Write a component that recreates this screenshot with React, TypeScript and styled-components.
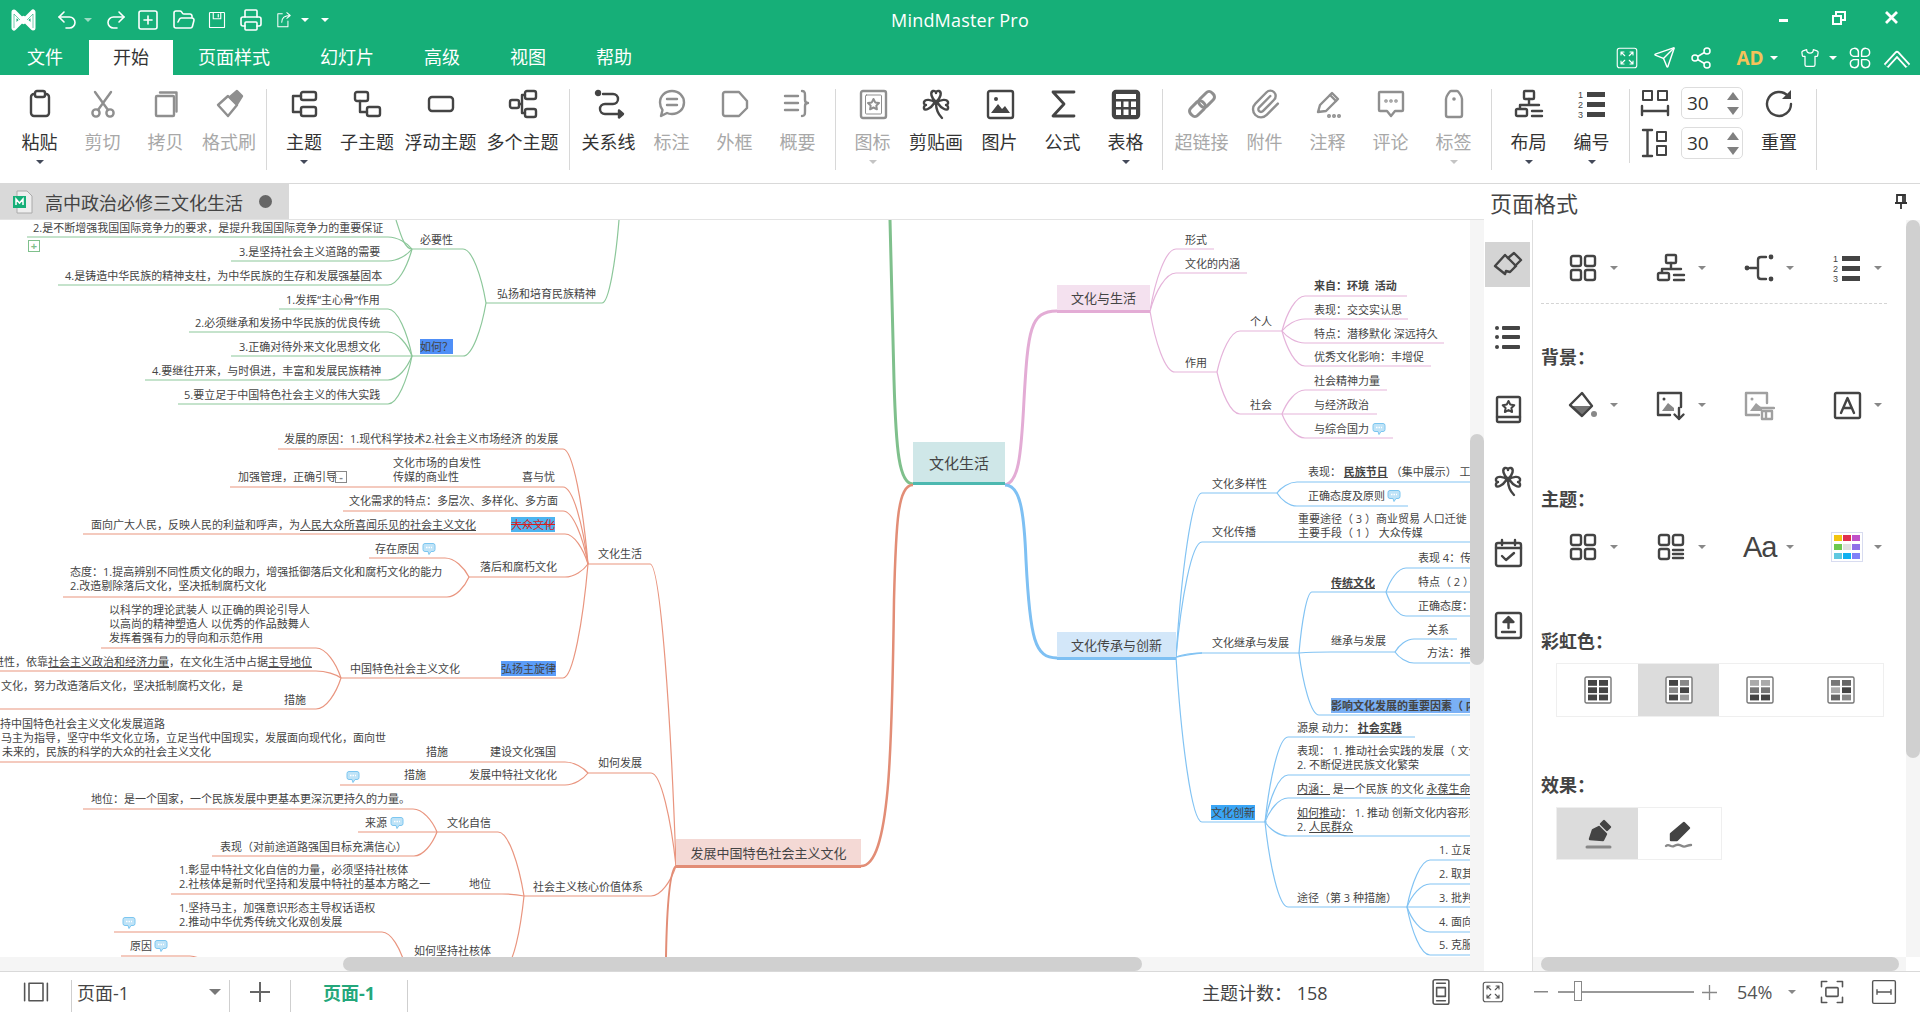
import React from 'react'
import styled, { createGlobalStyle } from 'styled-components'
import { Undo2, Redo2, SquarePlus, FolderOpen, Printer, Send, Share2, Shirt, Paperclip } from 'lucide-react'

const GREEN = '#16af78'
const FONT = `"Open Sans", "Noto Sans CJK SC", sans-serif`

const Global = createGlobalStyle`
	html, body { margin: 0; height: 1012px; overflow: hidden; background: #fff; }
	body { font-family: ${FONT}; color: #333; }
	* { box-sizing: border-box; }
`

const Ic = ({ children, s = 32, w = 2.4 }: { children: React.ReactNode; s?: number; w?: number }) => (
	<svg width={s} height={s} viewBox="0 0 32 32" fill="none" stroke="currentColor" strokeWidth={w} strokeLinecap="round" strokeLinejoin="round">
		{children}
	</svg>
)

// ribbon icons
const Clip = () => <Ic><rect x="7" y="6" width="18" height="22" rx="3" /><rect x="11" y="3" width="10" height="6" rx="2" fill="#fff" /></Ic>
const Cut = () => <Ic><circle cx="9" cy="25" r="3.6" /><circle cx="23" cy="25" r="3.6" /><path d="M11 22 24 4M21 22 8 4" /></Ic>
const Copy = () => <Ic><rect x="6" y="8" width="18" height="20" rx="1" /><path d="M10 4.500h16.500v19" /></Ic>
const Brush = () => <Ic><path d="M5 17 15 8l9 9-9 11z" /><path d="M17 9 24 3l5 5-5 8z" fill="currentColor" /></Ic>
const Topic = () => <Ic><rect x="13" y="4" width="15" height="8" rx="2" /><rect x="13" y="19" width="15" height="9" rx="2" /><path d="M13 8H5v16h8" /></Ic>
const SubTopic = () => <Ic><rect x="4" y="4" width="13" height="9" rx="2" /><rect x="16" y="19" width="13" height="9" rx="2" /><path d="M9 13v11h7" /></Ic>
const Floating = () => <Ic><rect x="4" y="9" width="24" height="14" rx="3" /></Ic>
const Multi = () => <Ic><rect x="3" y="12" width="9" height="8" rx="2" /><rect x="18" y="3" width="11" height="8" rx="2" /><rect x="18" y="21" width="11" height="8" rx="2" /><path d="M12 16h3M15 7v18M15 7h3M15 25h3" /></Ic>
const Relation = () => <Ic><circle cx="5" cy="5" r="2" fill="currentColor" /><path d="M10 6h10a5 5 0 0 1 0 10h-8a5 5 0 0 0 0 10h13" /><path d="M26 22.500 30 26l-4 3.500z" fill="currentColor" /></Ic>
const Callout = () => <Ic><path d="M16 3c7 0 12 5 12 11.500S23 26 16 26c-2 0-4-.5-5-1l-6 3 1.500-6C5 20 4 17.500 4 14.500 4 8 9 3 16 3z" /><path d="M11 11h10M11 17h10" /></Ic>
const Frame = () => <Ic><path d="M6 4h14l8 9v7l-8 8H6a2 2 0 0 1-2-2V6a2 2 0 0 1 2-2z" /></Ic>
const Summary = () => <Ic><path d="M3 8h13M3 15h13M3 22h13M20 3c3 0 3 2 3 5v4c0 2 1 3 3 3-2 0-3 1-3 3v5c0 3 0 5-3 5" /></Ic>
const Mark = () => <Ic><rect x="4" y="3" width="25" height="27" rx="2" /><rect x="8.500" y="7" width="16" height="19" rx="1" strokeWidth="1" /><path d="m16.500 11 1.700 3.400 3.800.6-2.700 2.600.6 3.700-3.400-1.800-3.400 1.800.6-3.700L11 15l3.800-.6z" strokeWidth="2" /></Ic>
const CloverIc = () => <Ic><path d="M16 14C11 10 10 4 13 3c2-.5 3 1 3 2 0-1 1-2.500 3-2 3 1 2 7-3 11zM16 15C11 11 5 11 4 14c-.5 2 1 3 2 3-1 0-2.500 1.500-2 3.500 1 3 7-.5 10-5zM16 15c5-4 11-4 12-1 .5 2-1 3-2 3 1 0 2.500 1.500 2 3.500-1 3-7-.5-10-5zM16 15c0 5 2 11 6 15" /></Ic>
const Picture = () => <Ic><rect x="4" y="3" width="25" height="27" rx="2" /><circle cx="12" cy="11" r="2" fill="currentColor" stroke="none" /><path d="M7 25l7-9 4 5 3-3 5 7z" fill="currentColor" stroke="none" /></Ic>
const Sigma = () => <Ic w={2.8}><path d="M27 4H6l11 12L6 28h21" /></Ic>
const Table = () => (
	<Ic>
		<rect x="3" y="3" width="26" height="27" rx="3" fill="currentColor" />
		<rect x="6" y="6" width="20" height="5" fill="#fff" stroke="none" />
		{[6, 13.5, 21].map(x => [13.500, 21.500].map(y => <rect key={`${x}${y}`} x={x} y={y} width="5" height="5.500" fill="#fff" stroke="none" />))}
	</Ic>
)
const Chain = () => <Ic w={3}><g transform="rotate(-45 16 16)"><rect x="1" y="11" width="17" height="10" rx="4" /><rect x="14" y="11" width="17" height="10" rx="4" /></g></Ic>
const Attach = () => <Paperclip size={32} strokeWidth={1.8} />
const Note = () => <Ic><path d="M6 24 8 17 20 5l6 6-12 12z" /><path d="m18 7 6 6" /><circle cx="17" cy="28" r=".8" /><circle cx="22" cy="28" r=".8" /><circle cx="27" cy="28" r=".8" /></Ic>
const Comment = () => <Ic><path d="M5 4h22a1 1 0 0 1 1 1v17a1 1 0 0 1-1 1h-7l-4 5-4-5H5a1 1 0 0 1-1-1V5a1 1 0 0 1 1-1z" /><circle cx="11" cy="13" r=".6" /><circle cx="16" cy="13" r=".6" /><circle cx="21" cy="13" r=".6" /></Ic>
const Tag = () => <Ic><path d="M8 11c0-3 4-8 5-8h6c1 0 5 5 5 8v16a2 2 0 0 1-2 2H10a2 2 0 0 1-2-2z" /><circle cx="16" cy="11" r="1.800" fill="currentColor" stroke="none" /></Ic>
const Layout = () => <Ic><rect x="11" y="3" width="10" height="8" rx="1" /><path d="M16 11v6M7 17h19M7 17v3" /><rect x="3" y="21" width="11" height="7" rx="1.500" /><path d="M19 23h10M19 28h10" /></Ic>
const NumList = () => (
	<Ic>
		<g fill="currentColor" stroke="none" fontFamily="Liberation Sans, sans-serif" fontSize="9">
			<text x="2" y="10">1</text>
			<text x="2" y="20">2</text>
			<text x="2" y="30">3</text>
			<rect x="11" y="4" width="18" height="5" />
			<rect x="11" y="14" width="18" height="5" />
			<rect x="11" y="24" width="18" height="5" />
		</g>
	</Ic>
)
const HSpace = () => <Ic><rect x="4" y="4" width="9" height="9" strokeWidth="2" /><rect x="19" y="4" width="9" height="9" strokeWidth="2" /><path d="M3 19v9M29 19v9M3 24h26" /></Ic>
const VSpace = () => <Ic><path d="M4 3h9M4 29h9M8.500 3v26" /><rect x="18" y="5" width="9" height="9" strokeWidth="2" /><rect x="18" y="19" width="9" height="9" strokeWidth="2" /></Ic>
const Reset = () => <Ic><path d="M25 8a12 12 0 1 0 3 8" /><path d="M28 2v9h-9z" fill="currentColor" stroke="none" /></Ic>

// panel and sidebar icons
const OutlineBrush = () => <Ic><path d="M3 17 13 6l11 11-6 6-4-1-1 3z" /><path d="m16 9 6-5 7 7-6 6" /></Ic>
const Bullets = () => <Ic><g fill="currentColor" stroke="none"><circle cx="5" cy="7" r="2" /><circle cx="5" cy="16" r="2" /><circle cx="5" cy="26" r="2" /><rect x="10" y="5" width="18" height="4" rx="1" /><rect x="10" y="14" width="18" height="4" rx="1" /><rect x="10" y="24" width="18" height="4" rx="1" /></g></Ic>
const Book = () => <Ic><rect x="5" y="4" width="23" height="25" rx="1.500" /><path d="M5 24h23" /><path d="m16.500 8 1.800 3.600 4 .6-2.900 2.800.7 4-3.600-1.900-3.600 1.900.7-4-2.900-2.800 4-.6z" strokeWidth="2" /></Ic>
const Calendar = () => <Ic><rect x="4" y="6" width="25" height="23" rx="2" /><path d="M4 11h25M10 3v5M23 3v5M10 19l4 4 8-7" /></Ic>
const Upload = () => <Ic><rect x="4" y="4" width="25" height="25" rx="2" /><path d="M10 23h13" /><path d="M16.500 19v-8" /><path d="M11.500 13l5-5 5 5z" fill="currentColor" /></Ic>
const Quad = () => <Ic><rect x="4" y="4" width="10" height="10" rx="2" /><rect x="18" y="4" width="10" height="10" rx="2" /><rect x="4" y="18" width="10" height="10" rx="2" /><rect x="18" y="18" width="10" height="10" rx="2" /></Ic>
const QuadList = () => <Ic><rect x="4" y="4" width="10" height="10" rx="2" /><rect x="18" y="4" width="10" height="10" rx="2" /><rect x="4" y="18" width="10" height="10" rx="2" /><path d="M18 19h10M18 23h10M18 27h10" /></Ic>
const Branch = () => <Ic><circle cx="4" cy="16" r="2.400" fill="currentColor" stroke="none" /><circle cx="28" cy="5" r="2.400" fill="currentColor" stroke="none" /><circle cx="28" cy="27" r="2.400" fill="currentColor" stroke="none" /><path d="M7 16h6M23 5h-5c-2 0-3 1-3 3v16c0 2 1 3 3 3h5" /></Ic>
const Bucket = () => <Ic><path d="M3 16 15 4l10 13-10 10z" /><path d="M5 17h19L15 27z" fill="currentColor" stroke="none" opacity=".75" /><circle cx="27" cy="25" r="3" fill="#888" stroke="none" /></Ic>
const ImgDown = () => <Ic><path d="M26 18V4H3v22h12" /><circle cx="9" cy="10" r="1.500" fill="currentColor" stroke="none" /><path d="M7 22l6-8 6 5v3z" fill="#888" stroke="none" /><path d="M24 19v11M19.500 25.500 24 30l4.500-4.500" /></Ic>
const ImgTrash = () => <Ic><path d="M24 14V4H3v22h13" /><circle cx="9" cy="10" r="1.500" fill="currentColor" stroke="none" /><path d="M7 22l6-8 6 5v3z" fill="currentColor" stroke="none" /><path d="M17 19h14M19 22h10v8H19zM23 22v8" /></Ic>
const LetterA = () => <Ic><rect x="4" y="4" width="25" height="25" rx="1.500" /><path d="m10 24 6.500-15L23 24M12.500 19h8" /></Ic>
const Palette = () => {
	const cs = ['#f2c40f', '#e0304f', '#c050c8', '#6cc850', '#e0e0e0', '#9070e8', '#60c8e0', '#10b0f0', '#8080f8']
	return (
		<svg width="32" height="30" viewBox="0 0 32 30">
			<rect x=".5" y=".5" width="31" height="29" fill="#fff" stroke="#d8dcf0" />
			{cs.map((c, i) => <rect key={c} x={3 + (i % 3) * 9} y={3 + Math.floor(i / 3) * 9} width="8" height="6" fill={c} />)}
		</svg>
	)
}
const Shades = ({ f }: { f: string[] }) => (
	<svg width="28" height="28" viewBox="0 0 28 28">
		<rect x="1" y="1" width="26" height="26" rx="1.500" fill="#fff" stroke="#777" strokeWidth="1.400" />
		{f.map((c, i) => <rect key={i} x={4 + (i % 2) * 11} y={4 + Math.floor(i / 2) * 7.300} width="9" height="5.800" fill={c} />)}
	</svg>
)
const Pen = () => <Ic><path d="M8 21l3-9 6-3 7 7-3 6z" fill="currentColor" /><path d="m19 6 3-3 6 6-3 3z" fill="currentColor" /><path d="M5 29h23" stroke="#888" strokeWidth="3" /></Ic>
const PenWave = () => <Ic><path d="M8 22V16L21 5l5 5-12 12z" fill="currentColor" /><path d="M3 28c3-3 5 2 8 0s5-2 8 0 5-1 9-1" stroke="#888" strokeWidth="2.400" /></Ic>

// title and menu bar icons
const Logo = () => (
	<svg width="25" height="22" viewBox="0 0 25 22" fill="none" strokeLinejoin="round">
		<path d="M3 19V3l9.500 9.500L22 3v16L12.500 9.500z" stroke="#fff" strokeWidth="5" />
		<path d="M3 19V5l6 6M22 19V5l-6 6" stroke={GREEN} strokeWidth="1" opacity=".6" />
	</svg>
)
const Disk = () => <Ic s={24} w={1.8}><path d="M5 4h22a1 1 0 0 1 1 1v22a1 1 0 0 1-1 1H5a1 1 0 0 1-1-1V5a1 1 0 0 1 1-1z" /><path d="M10 4v10h12V4M18 7v4" /></Ic>
const Export = () => <Ic s={24} w={1.8}><path d="M13 5H5v23h18V18" /><path d="M12 20c0-8 5-12 15-12M21 3l6 5-6 5" /></Ic>
const Expand = () => <Ic s={24} w={1.5}><rect x="3" y="3" width="26" height="26" rx="3" /><path d="M8 8l5 5M8 8v4M8 8h4M24 8l-5 5M24 8v4M24 8h-4M8 24l5-5M8 24v-4M8 24h4M24 24l-5-5M24 24v-4M24 24h-4" /></Ic>
const FourLeaf = () => <Ic s={26} w={1.800}><path d="M14 14H8a5 5 0 1 1 6-6zM18 14h6a5 5 0 1 0-6-6zM14 18H8a5 5 0 1 0 6 6zM18 18h6a5 5 0 1 1-6 6z" /></Ic>
const DoubleUp = () => (
	<svg width="28" height="24" viewBox="0 0 28 24" fill="none" strokeLinejoin="round">
		<path d="M3 20 14 8l11 12" stroke="#fff" strokeWidth="6" />
		<path d="M3 20 14 8l11 12" stroke={GREEN} strokeWidth="2.500" />
	</svg>
)
const WinMin = () => <svg width="12" height="12"><rect x="1" y="7" width="9" height="3" fill="#fff" /></svg>
const WinRestore = () => <svg width="14" height="14" fill="none" stroke="#fff" strokeWidth="2"><path d="M4 4V1h9v8h-3" /><rect x="1" y="5" width="8" height="8" /></svg>
const WinClose = () => <svg width="13" height="13" stroke="#fff" strokeWidth="2.800"><path d="M1 1l11 11M12 1 1 12" /></svg>
const FitPage = () => <Ic s={28} w={1.800}><rect x="7" y="2" width="18" height="28" rx="2" /><rect x="11" y="11" width="10" height="10" /><path d="M11 6h10M11 26h10" /></Ic>
const PageFrame = () => <Ic s={28} w={1.800}><path d="M4 10V4h6M22 4h6v6M28 22v6h-6M10 28H4v-6" /><rect x="9" y="11" width="14" height="10" rx="1" /></Ic>
const FitWidth = () => <Ic s={28} w={1.600}><rect x="3" y="3" width="26" height="26" rx="1.500" /><path d="M8 16h16M8 13.500v5M24 13.500v5" /></Ic>
const ViewToggle = () => <Ic s={28} w={1.800}><path d="M3 6v20M29 6v20" /><rect x="8" y="6" width="16" height="20" /></Ic>
const PinIc = () => <svg width="14" height="16" fill="none" stroke="#333" strokeWidth="1.800"><path d="M3 1h8v8H3zM1 9h12M7 9v6M9 1v8" /></svg>

const Page = styled.div`
	width: 1920px;
	height: 1012px;
	display: flex;
	flex-direction: column;
	overflow: hidden;
`
const Header = styled.header`
	height: 75px;
	background: ${GREEN};
	color: #fff;
	flex: none;
`
const TitleRow = styled.div`
	height: 40px;
	display: grid;
	grid-template-columns: 1fr auto 1fr;
	align-items: center;
`
const Slots = styled.div`
	display: flex;
	align-items: center;
`
const WinSlots = styled(Slots)`
	justify-content: flex-end;
	margin-top: -5px;
`
const Slot = styled.div<{ $w: number; $ml?: number }>`
	width: ${p => p.$w}px;
	margin-left: ${p => p.$ml || 0}px;
	display: flex;
	justify-content: center;
	align-items: center;
	flex: none;
`
const AppTitle = styled.div`
	font-size: 18px;
	letter-spacing: 0.2px;
`
const MenuRow = styled.nav`
	height: 35px;
	display: flex;
	align-items: stretch;
`
const MenuTab = styled.div<{ $active?: boolean; $first?: boolean }>`
	padding: 0 25px 0 ${p => (p.$first ? 27 : 25)}px;
	margin-right: ${p => (p.$first ? 1 : 0)}px;
	font-size: 18px;
	line-height: 35px;
	background: ${p => (p.$active ? '#fff' : 'transparent')};
	color: ${p => (p.$active ? '#333' : '#fff')};
	${p => p.$active && 'padding: 0 24px 0 24px;'}
`
const MenuRight = styled(Slots)`
	margin-left: auto;
`
const AdText = styled.span`
	color: #f5c25a;
	font-size: 19px;
	font-weight: 700;
`
const Caret = styled.i<{ $c?: string; $s?: number }>`
	display: block;
	width: 0;
	height: 0;
	border-style: solid;
	border-width: ${p => p.$s || 5}px ${p => (p.$s || 5) + 0.5}px 0;
	border-color: ${p => p.$c || '#fff'} transparent transparent;
`

const Ribbon = styled.div`
	height: 109px;
	flex: none;
	display: flex;
	padding-left: 8px;
	border-bottom: 1px solid #d9d9d9;
	background: #fff;
`
const RibbonBtn = styled.div<{ $w: number; $off?: boolean }>`
	width: ${p => p.$w}px;
	flex: none;
	display: flex;
	flex-direction: column;
	align-items: center;
	padding-top: 13px;
	color: ${p => (p.$off ? '#8f8f8f' : '#444')};
`
const RibbonLabel = styled.span<{ $off?: boolean }>`
	margin-top: 10px;
	font-size: 18px;
	line-height: 24px;
	white-space: nowrap;
	color: ${p => (p.$off ? '#a8a8a8' : '#333')};
`
const RibbonCaret = styled.div`
	margin-top: 6px;
`
const RibbonSep = styled.div<{ $l: number; $r: number; $h?: number }>`
	width: 1px;
	height: ${p => p.$h || 81}px;
	margin: 14px ${p => p.$r}px 0 ${p => p.$l}px;
	background: #d8d8d8;
	flex: none;
`
const SpacingBlock = styled.div`
	display: flex;
	flex-direction: column;
	gap: 8px;
	padding: 12px 0 0 3px;
	color: #444;
`
const SpacingRow = styled.div`
	display: flex;
	align-items: center;
	gap: 10px;
`
const Spinner = styled.div`
	width: 62px;
	height: 32px;
	border: 1px solid #ddd;
	border-radius: 5px;
	display: flex;
	align-items: center;
	justify-content: space-between;
	padding: 0 3px 0 5px;
	font-size: 19px;
	color: #333;
`
const SpinArrows = styled.div`
	display: flex;
	flex-direction: column;
	gap: 7px;
`
const SpinUp = styled.i`
	display: block;
	border-style: solid;
	border-width: 0 6px 8px;
	border-color: transparent transparent #808080;
`
const SpinDown = styled.i`
	display: block;
	border-style: solid;
	border-width: 8px 6px 0;
	border-color: #808080 transparent transparent;
`

const Workspace = styled.div`
	height: 787px;
	flex: none;
	display: flex;
`
const LeftPane = styled.div`
	width: 1484px;
	flex: none;
	display: flex;
	flex-direction: column;
`
const TabStrip = styled.div`
	height: 36px;
	flex: none;
	border-bottom: 1px solid #e3e3e3;
	display: flex;
`
const DocTab = styled.div`
	width: 289px;
	background: #d9d9d9;
	display: flex;
	align-items: center;
	padding-left: 13px;
	font-size: 18px;
	color: #444;
`
const DocName = styled.span`
	margin-left: 12px;
`
const DocDot = styled.i`
	width: 13px;
	height: 13px;
	border-radius: 50%;
	background: #666;
	margin-left: 16px;
`
const CanvasRow = styled.div`
	height: 737px;
	display: flex;
`
const MapArea = styled.div`
	width: 1470px;
	height: 737px;
	position: relative;
	overflow: hidden;
	background: #fff;
`
const VTrack = styled.div<{ $h?: number }>`
	width: 14px;
	height: ${p => p.$h || 737}px;
	flex: none;
	background: #f5f5f5;
`
const VThumb = styled.div<{ $top: number; $h: number }>`
	margin-top: ${p => p.$top}px;
	height: ${p => p.$h}px;
	background: #d0d0d0;
	border-radius: 7px;
`
const HTrack = styled.div`
	height: 14px;
	flex: none;
	background: #f5f5f5;
`
const HThumb = styled.div<{ $left: number; $w: number }>`
	margin-left: ${p => p.$left}px;
	width: ${p => p.$w}px;
	height: 14px;
	background: #d0d0d0;
	border-radius: 7px;
`

const MapText = styled.div<{ $b?: boolean }>`
	position: absolute;
	font-size: 11px;
	line-height: 14px;
	color: #444;
	white-space: pre;
	font-weight: ${p => (p.$b ? 700 : 400)};
`
const Hl = styled.span<{ $c: string; $red?: boolean }>`
	background: ${p => p.$c};
	${p => p.$red && 'color: #d41f1f; text-decoration: line-through;'}
`
const TopicBox = styled.div<{ $bg: string; $line: string; $fs?: number }>`
	position: absolute;
	background: ${p => p.$bg};
	border-bottom: 3px solid ${p => p.$line};
	font-size: ${p => p.$fs || 13}px;
	color: #444;
	display: flex;
	align-items: center;
	justify-content: center;
`
const Lines = styled.svg`
	position: absolute;
	left: 0;
	top: 0;
`
const Marker = styled.div`
	position: absolute;
	line-height: 0;
`
const MiniBox = styled.div<{ $c: string }>`
	position: absolute;
	width: 12px;
	height: 12px;
	border: 1px solid ${p => p.$c};
	color: ${p => p.$c};
	font-size: 11px;
	line-height: 9px;
	text-align: center;
	font-weight: 700;
`

const Panel = styled.aside`
	width: 436px;
	flex: none;
	display: flex;
	flex-direction: column;
`
const PanelHead = styled.div`
	height: 36px;
	flex: none;
	display: flex;
	align-items: center;
	justify-content: space-between;
	padding: 0 12px 0 6px;
	font-size: 22px;
	color: #444;
`
const PanelBody = styled.div`
	flex: 1;
	display: flex;
	min-height: 0;
`
const SideRail = styled.div`
	width: 49px;
	flex: none;
	border-right: 1px solid #dedede;
	padding: 22px 0 0 1px;
	display: flex;
	flex-direction: column;
	gap: 27px;
`
const SideItem = styled.div<{ $on?: boolean }>`
	width: 45px;
	height: 45px;
	background: ${p => (p.$on ? '#d4d4d4' : 'transparent')};
	color: #444;
	display: flex;
	align-items: center;
	justify-content: center;
`
const PanelMain = styled.div`
	width: 373px;
	flex: none;
	display: flex;
	flex-direction: column;
`
const PanelScroll = styled.div`
	flex: 1;
	min-height: 0;
	padding-top: 32px;
`
const IconRow = styled.div<{ $mt?: number }>`
	display: flex;
	height: 32px;
	padding-left: 6px;
	margin-top: ${p => p.$mt || 0}px;
`
const IconCell = styled.div<{ $off?: boolean }>`
	width: 88px;
	padding-left: 28px;
	display: flex;
	align-items: center;
	gap: 11px;
	color: ${p => (p.$off ? '#a0a0a0' : '#444')};
`
const Dashed = styled.div`
	margin: 19px 0 0 8px;
	width: 346px;
	border-top: 1px dashed #d4d4d4;
`
const SectionLabel = styled.div<{ $mt: number }>`
	margin: ${p => p.$mt}px 0 0 8px;
	font-size: 18px;
	line-height: 24px;
	font-weight: 700;
	color: #444;
`
const BigAa = styled.span`
	font-size: 29px;
	line-height: 32px;
	width: 32px;
	font-family: "Liberation Sans", sans-serif;
	color: #444;
	letter-spacing: -1px;
`
const ChoiceBox = styled.div<{ $w: number; $h: number }>`
	margin: 10px 0 0 23px;
	width: ${p => p.$w}px;
	height: ${p => p.$h}px;
	border: 1px solid #efefef;
	display: flex;
`
const Choice = styled.div<{ $on?: boolean }>`
	width: 81px;
	background: ${p => (p.$on ? '#dcdcdc' : '#fff')};
	color: #444;
	display: flex;
	align-items: center;
	justify-content: center;
`

const Status = styled.footer`
	height: 41px;
	flex: none;
	border-top: 1px solid #d9d9d9;
	display: flex;
	align-items: center;
	color: #555;
`
const StatusSep = styled.div`
	width: 1px;
	height: 32px;
	background: #cfcfcf;
	flex: none;
	align-self: flex-end;
`
const PageSelect = styled.div`
	width: 157px;
	display: flex;
	align-items: center;
	justify-content: space-between;
	padding: 0 8px 0 5px;
	font-size: 18px;
	color: #444;
`
const PlusMark = styled.div`
	width: 60px;
	display: flex;
	justify-content: center;
`
const PageName = styled.div`
	width: 116px;
	text-align: center;
	font-size: 18px;
	font-weight: 700;
	color: #24a77b;
`
const CountText = styled.div`
	margin-left: 794px;
	width: 130px;
	font-size: 18px;
	color: #444;
	white-space: nowrap;
`
const Zoom = styled.span<{ $ml: number }>`
	margin-left: ${p => p.$ml}px;
	font-size: 18px;
	color: #555;
	width: 37px;
`
const SliderBar = styled.div`
	margin-left: 9px;
	width: 136px;
	height: 2px;
	background: #999;
	position: relative;
`
const SliderThumb = styled.div`
	position: absolute;
	left: 16px;
	top: -10px;
	width: 8px;
	height: 20px;
	background: #fff;
	border: 1px solid #888;
`

// ---- mind map data, page coordinates ----

type Link = [number, number, number, number, number]

const curve = ([jx, jy, ex, ey, tail]: Link) => {
	const dx = ex - jx
	const dy = ey - jy
	return `M${jx} ${jy}C${jx + dx * 0.2} ${jy + dy * 0.5} ${jx + dx * 0.6} ${ey} ${ex} ${ey}L${tail} ${ey}`
}

const linkSets: { c: string; links: Link[]; extra?: string[] }[] = [
	{
		c: '#8cc79a',
		extra: ['M396 220C400 232 404 249 412 249'],
		links: [
			[619, 220, 602, 303, 486],
			[486, 303, 463, 249, 412],
			[486, 303, 463, 356, 412],
			[412, 249, 388, 237, 27],
			[412, 249, 388, 261, 231],
			[412, 249, 388, 285, 58],
			[412, 356, 388, 309, 279],
			[412, 356, 388, 332, 189],
			[412, 356, 388, 356, 231],
			[412, 356, 388, 380, 145],
			[412, 356, 388, 404, 178]
		]
	},
	{
		c: '#e9957f',
		links: [
			[676, 866, 650, 564, 588],
			[676, 866, 651, 773, 588],
			[676, 866, 651, 896, 524],
			[588, 564, 563, 449, 278],
			[588, 564, 563, 487, 230],
			[588, 564, 563, 511, 343],
			[588, 564, 565, 534, 83],
			[588, 564, 565, 577, 469],
			[588, 564, 563, 678, 341],
			[469, 577, 445, 558, 369],
			[469, 577, 447, 597, 63],
			[341, 678, 316, 648, 101],
			[341, 678, 316, 671, 0],
			[341, 678, 316, 709, 0],
			[588, 773, 565, 762, 0],
			[588, 773, 565, 785, 340],
			[524, 896, 498, 832, 437],
			[524, 896, 502, 894, 171],
			[524, 896, 506, 965, 405],
			[437, 832, 413, 809, 83],
			[437, 832, 437, 832, 358],
			[437, 832, 414, 856, 212],
			[405, 965, 382, 932, 114],
			[215, 975, 190, 956, 121]
		]
	},
	{
		c: '#e5b3da',
		links: [
			[1150, 311, 1176, 249, 1214],
			[1150, 311, 1176, 273, 1247],
			[1150, 311, 1175, 372, 1217],
			[1217, 372, 1240, 331, 1282],
			[1217, 372, 1240, 414, 1282],
			[1282, 331, 1305, 296, 1407],
			[1282, 331, 1305, 319, 1408],
			[1282, 331, 1305, 343, 1444],
			[1282, 331, 1305, 366, 1431],
			[1282, 414, 1305, 390, 1387],
			[1282, 414, 1305, 414, 1377],
			[1282, 414, 1305, 438, 1393]
		]
	},
	{
		c: '#82c3f3',
		links: [
			[1176, 657, 1202, 493, 1277],
			[1176, 657, 1202, 542, 1470],
			[1176, 657, 1202, 653, 1299],
			[1176, 657, 1202, 822, 1267],
			[1277, 493, 1297, 482, 1470],
			[1277, 493, 1297, 506, 1408],
			[1299, 653, 1312, 592, 1386],
			[1299, 653, 1331, 652, 1395],
			[1299, 653, 1319, 715, 1470],
			[1386, 592, 1406, 568, 1470],
			[1386, 592, 1406, 592, 1470],
			[1386, 592, 1406, 616, 1470],
			[1395, 652, 1414, 639, 1457],
			[1395, 652, 1414, 663, 1470],
			[1265, 822, 1288, 737, 1415],
			[1265, 822, 1288, 775, 1470],
			[1265, 822, 1288, 798, 1470],
			[1265, 822, 1288, 836, 1470],
			[1265, 822, 1288, 907, 1407],
			[1407, 907, 1430, 860, 1470],
			[1407, 907, 1430, 884, 1470],
			[1407, 907, 1430, 907, 1470],
			[1407, 907, 1430, 932, 1470],
			[1407, 907, 1430, 955, 1470]
		]
	}
]

const trunks = [
	{ c: '#7fc08c', w: 3, d: 'M913 484C899 484 896 450 894 380L890 220' },
	{ c: '#e3acd5', w: 3, d: 'M1005 485C1018 482 1021 460 1024 400C1028 330 1030 311 1057 311' },
	{ c: '#7ec0f3', w: 3, d: 'M1005 485C1020 485 1024 510 1026 560C1030 640 1035 658 1057 658' },
	{ c: '#e28d76', w: 2.5, d: 'M913 485C898 485 896 520 894 600C892 750 890 866 861 866' },
	{ c: '#e28d76', w: 2, d: 'M676 866C670 870 667 900 666 957' },
	{ c: '#82c3f3', w: 1.5, d: 'M1176 657C1190 655 1194 653 1202 653' }
]

const texts: [number, number, React.ReactNode, boolean?][] = [
	[33, 228, '2.是不断增强我国国际竞争力的要求，是提升我国国际竞争力的重要保证'],
	[420, 240, '必要性'],
	[239, 252, '3.是坚持社会主义道路的需要'],
	[65, 276, '4.是铸造中华民族的精神支柱，为中华民族的生存和发展强基固本'],
	[497, 294, '弘扬和培育民族精神'],
	[286, 300, '1.发挥“主心骨”作用'],
	[195, 323, '2.必须继承和发扬中华民族的优良传统'],
	[239, 347, '3.正确对待外来文化思想文化'],
	[420, 347, <Hl $c="#4f8ff7">如何？</Hl>],
	[152, 371, '4.要继往开来，与时俱进，丰富和发展民族精神'],
	[184, 395, '5.要立足于中国特色社会主义的伟大实践'],
	[284, 439, '发展的原因：1.现代科学技术2.社会主义市场经济 的发展'],
	[393, 463, '文化市场的自发性\n传媒的商业性'],
	[238, 477, '加强管理，正确引导'],
	[522, 477, '喜与忧'],
	[349, 501, '文化需求的特点：多层次、多样化、多方面'],
	[91, 525, <>面向广大人民，反映人民的利益和呼声，为<u>人民大众所喜闻乐见的社会主义文化</u></>],
	[511, 525, <Hl $c="#4cb4f0" $red>大众文化</Hl>],
	[375, 549, '存在原因'],
	[598, 554, '文化生活'],
	[480, 567, '落后和腐朽文化'],
	[70, 572, '态度：1.提高辨别不同性质文化的眼力，增强抵御落后文化和腐朽文化的能力\n2.改造剔除落后文化，坚决抵制腐朽文化'],
	[109, 610, '以科学的理论武装人 以正确的舆论引导人\n以高尚的精神塑造人 以优秀的作品鼓舞人\n发挥着强有力的导向和示范作用'],
	[-18, 662, <>先进性，依靠<u>社会主义政治和经济力量</u>，在文化生活中占据<u>主导地位</u></>],
	[350, 669, '中国特色社会主义文化'],
	[501, 669, <Hl $c="#5b9df9">弘扬主旋律</Hl>],
	[1, 686, '文化，努力改造落后文化，坚决抵制腐朽文化，是'],
	[284, 700, '措施'],
	[0, 724, '持中国特色社会主义文化发展道路'],
	[1, 738, '马主为指导，坚守中华文化立场，立足当代中国现实，发展面向现代化，面向世'],
	[2, 752, '未来的，民族的科学的大众的社会主义文化'],
	[426, 752, '措施'],
	[490, 752, '建设文化强国'],
	[598, 763, '如何发展'],
	[404, 775, '措施'],
	[469, 775, '发展中特社文化化'],
	[91, 799, '地位：是一个国家，一个民族发展中更基本更深沉更持久的力量。'],
	[365, 823, '来源'],
	[447, 823, '文化自信'],
	[220, 847, '表现（对前途道路强国目标充满信心）'],
	[179, 870, '1.彰显中特社文化自信的力量，必须坚持社核体\n2.社核体是新时代坚持和发展中特社的基本方略之一'],
	[469, 884, '地位'],
	[533, 887, '社会主义核心价值体系'],
	[179, 908, '1.坚持马主，加强意识形态主导权话语权\n2.推动中华优秀传统文化双创发展'],
	[130, 946, '原因'],
	[414, 951, '如何坚持社核体'],
	[1185, 240, '形式'],
	[1185, 264, '文化的内涵'],
	[1314, 286, '来自：环境  活动', true],
	[1314, 310, '表现：交交实认思'],
	[1250, 322, '个人'],
	[1314, 334, '特点：潜移默化 深远持久'],
	[1314, 357, '优秀文化影响：丰增促'],
	[1185, 363, '作用'],
	[1314, 381, '社会精神力量'],
	[1250, 405, '社会'],
	[1314, 405, '与经济政治'],
	[1314, 429, '与综合国力'],
	[1308, 472, <>表现： <b><u>民族节日</u></b> （集中展示） 工</>],
	[1212, 484, '文化多样性'],
	[1308, 496, '正确态度及原则'],
	[1298, 519, '重要途径（ 3 ）商业贸易 人口迁徙\n主要手段（ 1 ） 大众传媒'],
	[1212, 532, '文化传播'],
	[1418, 558, '表现 4：传'],
	[1331, 583, <u>传统文化</u>, true],
	[1418, 582, '特点（ 2 ）'],
	[1418, 606, '正确态度：'],
	[1427, 630, '关系'],
	[1331, 641, '继承与发展'],
	[1212, 643, '文化继承与发展'],
	[1427, 653, '方法：推'],
	[1331, 706, <Hl $c="#7ab0f5">影响文化发展的重要因素（ 内</Hl>, true],
	[1297, 728, <>源泉 动力： <b><u>社会实践</u></b></>],
	[1297, 751, '表现： 1. 推动社会实践的发展（ 文化\n2. 不断促进民族文化繁荣'],
	[1297, 789, <><u>内涵：</u> 是一个民族 的文化 <u>永葆生命</u></>],
	[1211, 813, <Hl $c="#3aa5f5">文化创新</Hl>],
	[1297, 813, <><u>如何推动</u>： 1. 推动 创新文化内容形式</>],
	[1297, 827, <>2. <u>人民群众</u></>],
	[1439, 850, '1. 立足'],
	[1439, 874, '2. 取其'],
	[1297, 898, '途径（第 3 种措施）'],
	[1439, 898, '3. 批判'],
	[1439, 922, '4. 面向'],
	[1439, 945, '5. 克服']
]

const noteMarks = [
	[429, 549],
	[353, 777],
	[397, 823],
	[129, 923],
	[161, 946],
	[1379, 429],
	[1394, 496]
]

const NoteBubble = () => (
	<svg width="14" height="14" viewBox="0 0 14 14">
		<path d="M3 1.500h8a2 2 0 0 1 2 2v4a2 2 0 0 1-2 2H9l-2 3-1-3H3a2 2 0 0 1-2-2v-4a2 2 0 0 1 2-2z" fill="#bfe3f7" stroke="#7cc6f0" />
		<path d="M4 5.500h6" stroke="#fff" strokeWidth="1.500" strokeDasharray="1.500 1" />
	</svg>
)

const MindMap = () => (
	<MapArea>
		<Lines width="1470" height="737" viewBox="0 220 1470 737" fill="none">
			{linkSets.map(set => (
				<g key={set.c} stroke={set.c} strokeWidth="1.200">
					{set.links.map(l => <path key={l.join()} d={curve(l)} />)}
					{set.extra && set.extra.map(d => <path key={d} d={d} />)}
				</g>
			))}
			{trunks.map(t => <path key={t.d} d={t.d} stroke={t.c} strokeWidth={t.w} />)}
		</Lines>
		{texts.map(([x, y, t, b], i) => (
			<MapText key={i} $b={b} style={{ left: x, top: y - 227 }}>
				{t}
			</MapText>
		))}
		{noteMarks.map(([x, y]) => (
			<Marker key={x} style={{ left: x - 7, top: y - 227 }}>
				<NoteBubble />
			</Marker>
		))}
		<MiniBox $c="#7fc08c" style={{ left: 28, top: 20 }}>+</MiniBox>
		<MiniBox $c="#888" style={{ left: 335, top: 251 }}>-</MiniBox>
		<TopicBox $bg="#cfe7e8" $line="#4db8b0" $fs={15} style={{ left: 913, top: 222, width: 92, height: 43 }}>文化生活</TopicBox>
		<TopicBox $bg="#f4e1ef" $line="#e3acd5" style={{ left: 1057, top: 65, width: 93, height: 28 }}>文化与生活</TopicBox>
		<TopicBox $bg="#d3e7f9" $line="#7ec0f3" style={{ left: 1057, top: 412, width: 119, height: 28 }}>文化传承与创新</TopicBox>
		<TopicBox $bg="#f4d9d5" $line="#e28d76" style={{ left: 676, top: 619, width: 185, height: 29 }}>发展中国特色社会主义文化</TopicBox>
	</MapArea>
)

type Btn = { label: string; icon: React.FC; w?: number; off?: boolean; caret?: boolean }
type Group = { btns: Btn[]; l: number; r: number; h?: number }

const groups: Group[] = [
	{
		l: 5,
		r: 5,
		btns: [
			{ label: '粘贴', icon: Clip, caret: true },
			{ label: '剪切', icon: Cut, off: true },
			{ label: '拷贝', icon: Copy, off: true },
			{ label: '格式刷', icon: Brush, off: true, w: 64 }
		]
	},
	{
		l: 7,
		r: 7,
		btns: [
			{ label: '主题', icon: Topic, caret: true, w: 64 },
			{ label: '子主题', icon: SubTopic, w: 62 },
			{ label: '浮动主题', icon: Floating, w: 85 },
			{ label: '多个主题', icon: Multi, w: 79 }
		]
	},
	{
		l: 6,
		r: 5,
		btns: [
			{ label: '关系线', icon: Relation },
			{ label: '标注', icon: Callout, off: true },
			{ label: '外框', icon: Frame, off: true },
			{ label: '概要', icon: Summary, off: true }
		]
	},
	{
		l: 5,
		r: 7,
		btns: [
			{ label: '图标', icon: Mark, off: true, caret: true },
			{ label: '剪贴画', icon: CloverIc, w: 64 },
			{ label: '图片', icon: Picture },
			{ label: '公式', icon: Sigma },
			{ label: '表格', icon: Table, caret: true }
		]
	},
	{
		l: 6,
		r: 5,
		btns: [
			{ label: '超链接', icon: Chain, off: true },
			{ label: '附件', icon: Attach, off: true },
			{ label: '注释', icon: Note, off: true },
			{ label: '评论', icon: Comment, off: true },
			{ label: '标签', icon: Tag, off: true, caret: true }
		]
	},
	{
		l: 6,
		r: 6,
		h: 74,
		btns: [
			{ label: '布局', icon: Layout, caret: true },
			{ label: '编号', icon: NumList, caret: true }
		]
	}
]

const shades = [
	['#444', '#444', '#444', '#444', '#444', '#444'],
	['#444', '#888', '#888', '#444', '#444', '#999'],
	['#aaa', '#aaa', '#777', '#777', '#444', '#444'],
	['#777', '#666', '#aaa', '#444', '#666', '#888']
]

const GreyCaret = () => <Caret $c="#888" $s={4} />

const PanelIconRow = ({ icons, mt }: { icons: React.ReactNode[]; mt?: number }) => (
	<IconRow $mt={mt}>
		{icons.map((ic, i) => (
			<IconCell key={i}>
				{ic}
				<GreyCaret />
			</IconCell>
		))}
	</IconRow>
)

const Spin = ({ v }: { v: number }) => (
	<Spinner>
		{v}
		<SpinArrows>
			<SpinUp />
			<SpinDown />
		</SpinArrows>
	</Spinner>
)

export default function App() {
	return (
		<Page>
			<Global />
			<Header>
				<TitleRow>
					<Slots>
						<Slot $w={25} $ml={11}><Logo /></Slot>
						<Slot $w={24} $ml={19}><Undo2 size={24} strokeWidth={1.6} /></Slot>
						<Slot $w={18}><Caret $c="#9bdcc4" $s={4} /></Slot>
						<Slot $w={38}><Redo2 size={24} strokeWidth={1.6} /></Slot>
						<Slot $w={26}><SquarePlus size={24} strokeWidth={1.6} /></Slot>
						<Slot $w={46}><FolderOpen size={24} strokeWidth={1.6} /></Slot>
						<Slot $w={20}><Disk /></Slot>
						<Slot $w={48}><Printer size={24} strokeWidth={1.6} /></Slot>
						<Slot $w={18}><Export /></Slot>
						<Slot $w={24}><Caret $s={4} /></Slot>
						<Slot $w={16}><Caret $s={4} /></Slot>
					</Slots>
					<AppTitle>MindMaster Pro</AppTitle>
					<WinSlots>
						<Slot $w={14}><WinMin /></Slot>
						<Slot $w={14} $ml={41}><WinRestore /></Slot>
						<Slot $w={14} $ml={38}><WinClose /></Slot>
						<Slot $w={22} />
					</WinSlots>
				</TitleRow>
				<MenuRow>
					<MenuTab $first>文件</MenuTab>
					<MenuTab $active>开始</MenuTab>
					<MenuTab>页面样式</MenuTab>
					<MenuTab>幻灯片</MenuTab>
					<MenuTab>高级</MenuTab>
					<MenuTab>视图</MenuTab>
					<MenuTab>帮助</MenuTab>
					<MenuRight>
						<Slot $w={36}><Expand /></Slot>
						<Slot $w={38}><Send size={23} strokeWidth={1.5} /></Slot>
						<Slot $w={36}><Share2 size={24} strokeWidth={1.5} /></Slot>
						<Slot $w={28} $ml={17}><AdText>AD</AdText></Slot>
						<Slot $w={20}><Caret $s={4} /></Slot>
						<Slot $w={20} $ml={16}><Shirt size={24} strokeWidth={1.5} /></Slot>
						<Slot $w={26}><Caret $s={4} /></Slot>
						<Slot $w={28}><FourLeaf /></Slot>
						<Slot $w={46}><DoubleUp /></Slot>
					</MenuRight>
				</MenuRow>
			</Header>

			<Ribbon>
				{groups.map(g => (
					<React.Fragment key={g.btns[0].label}>
						{g.btns.map(b => (
							<RibbonBtn key={b.label} $w={b.w || 63} $off={b.off}>
								<b.icon />
								<RibbonLabel $off={b.off}>{b.label}</RibbonLabel>
								{b.caret && <RibbonCaret><Caret $c={b.off ? '#c4c4c4' : '#444a5a'} $s={4} /></RibbonCaret>}
							</RibbonBtn>
						))}
						<RibbonSep $l={g.l} $r={g.r} $h={g.h} />
					</React.Fragment>
				))}
				<SpacingBlock>
					<SpacingRow><HSpace /><Spin v={30} /></SpacingRow>
					<SpacingRow><VSpace /><Spin v={30} /></SpacingRow>
				</SpacingBlock>
				<RibbonBtn $w={62} style={{ marginLeft: 5 }}>
					<Reset />
					<RibbonLabel>重置</RibbonLabel>
				</RibbonBtn>
				<RibbonSep $l={6} $r={0} />
			</Ribbon>

			<Workspace>
				<LeftPane>
					<TabStrip>
						<DocTab>
							<svg width="20" height="24" viewBox="0 0 20 24">
								<path d="M4 1h10l5 5v17H4z" fill="#eee" stroke="#aaa" />
								<rect x="0" y="6" width="13" height="12" fill="#16af78" />
								<path d="M3 15V9l3.500 4L10 9v6" fill="none" stroke="#fff" strokeWidth="1.500" />
							</svg>
							<DocName>高中政治必修三文化生活</DocName>
							<DocDot />
						</DocTab>
					</TabStrip>
					<CanvasRow>
						<MindMap />
						<VTrack><VThumb $top={214} $h={231} /></VTrack>
					</CanvasRow>
					<HTrack><HThumb $left={343} $w={799} /></HTrack>
				</LeftPane>

				<Panel>
					<PanelHead>
						页面格式
						<PinIc />
					</PanelHead>
					<PanelBody>
						<SideRail>
							<SideItem $on><OutlineBrush /></SideItem>
							<SideItem><Bullets /></SideItem>
							<SideItem><Book /></SideItem>
							<SideItem><CloverIc /></SideItem>
							<SideItem><Calendar /></SideItem>
							<SideItem><Upload /></SideItem>
						</SideRail>
						<PanelMain>
							<PanelScroll>
								<PanelIconRow icons={[<Quad />, <Layout />, <Branch />, <NumList />]} />
								<Dashed />
								<SectionLabel $mt={41}>背景：</SectionLabel>
								<IconRow $mt={20}>
									<IconCell><Bucket /><GreyCaret /></IconCell>
									<IconCell><ImgDown /><GreyCaret /></IconCell>
									<IconCell $off><ImgTrash /></IconCell>
									<IconCell><LetterA /><GreyCaret /></IconCell>
								</IconRow>
								<SectionLabel $mt={66}>主题：</SectionLabel>
								<PanelIconRow mt={20} icons={[<Quad />, <QuadList />, <BigAa>Aa</BigAa>, <Palette />]} />
								<SectionLabel $mt={66}>彩虹色：</SectionLabel>
								<ChoiceBox $w={328} $h={54}>
									{shades.map((f, i) => (
										<Choice key={i} $on={i === 1}><Shades f={f} /></Choice>
									))}
								</ChoiceBox>
								<SectionLabel $mt={56}>效果：</SectionLabel>
								<ChoiceBox $w={166} $h={53}>
									<Choice $on><Pen /></Choice>
									<Choice><PenWave /></Choice>
								</ChoiceBox>
							</PanelScroll>
							<HTrack><HThumb $left={8} $w={358} /></HTrack>
						</PanelMain>
						<VTrack><VThumb $top={0} $h={538} /></VTrack>
					</PanelBody>
				</Panel>
			</Workspace>

			<Status>
				<Slot $w={71}><ViewToggle /></Slot>
				<StatusSep />
				<PageSelect>
					页面-1
					<Caret $c="#777" $s={6} />
				</PageSelect>
				<StatusSep />
				<PlusMark>
					<svg width="22" height="22" stroke="#666" strokeWidth="2"><path d="M1 11h20M11 1v20" /></svg>
				</PlusMark>
				<StatusSep />
				<PageName>页面-1</PageName>
				<StatusSep />
				<CountText>主题计数： 158</CountText>
				<Slot $w={28} $ml={95}><FitPage /></Slot>
				<Slot $w={28} $ml={24}><Expand /></Slot>
				<Slot $w={16} $ml={26}>
					<svg width="14" height="2"><rect width="14" height="1.500" fill="#888" /></svg>
				</Slot>
				<SliderBar><SliderThumb /></SliderBar>
				<Slot $w={16} $ml={7}>
					<svg width="15" height="15" stroke="#888" strokeWidth="1.300"><path d="M0 7.500h15M7.500 0v15" /></svg>
				</Slot>
				<Zoom $ml={20}>54%</Zoom>
				<Slot $w={10} $ml={13}><Caret $c="#888" $s={4} /></Slot>
				<Slot $w={28} $ml={21}><PageFrame /></Slot>
				<Slot $w={28} $ml={24}><FitWidth /></Slot>
			</Status>
		</Page>
	)
}
